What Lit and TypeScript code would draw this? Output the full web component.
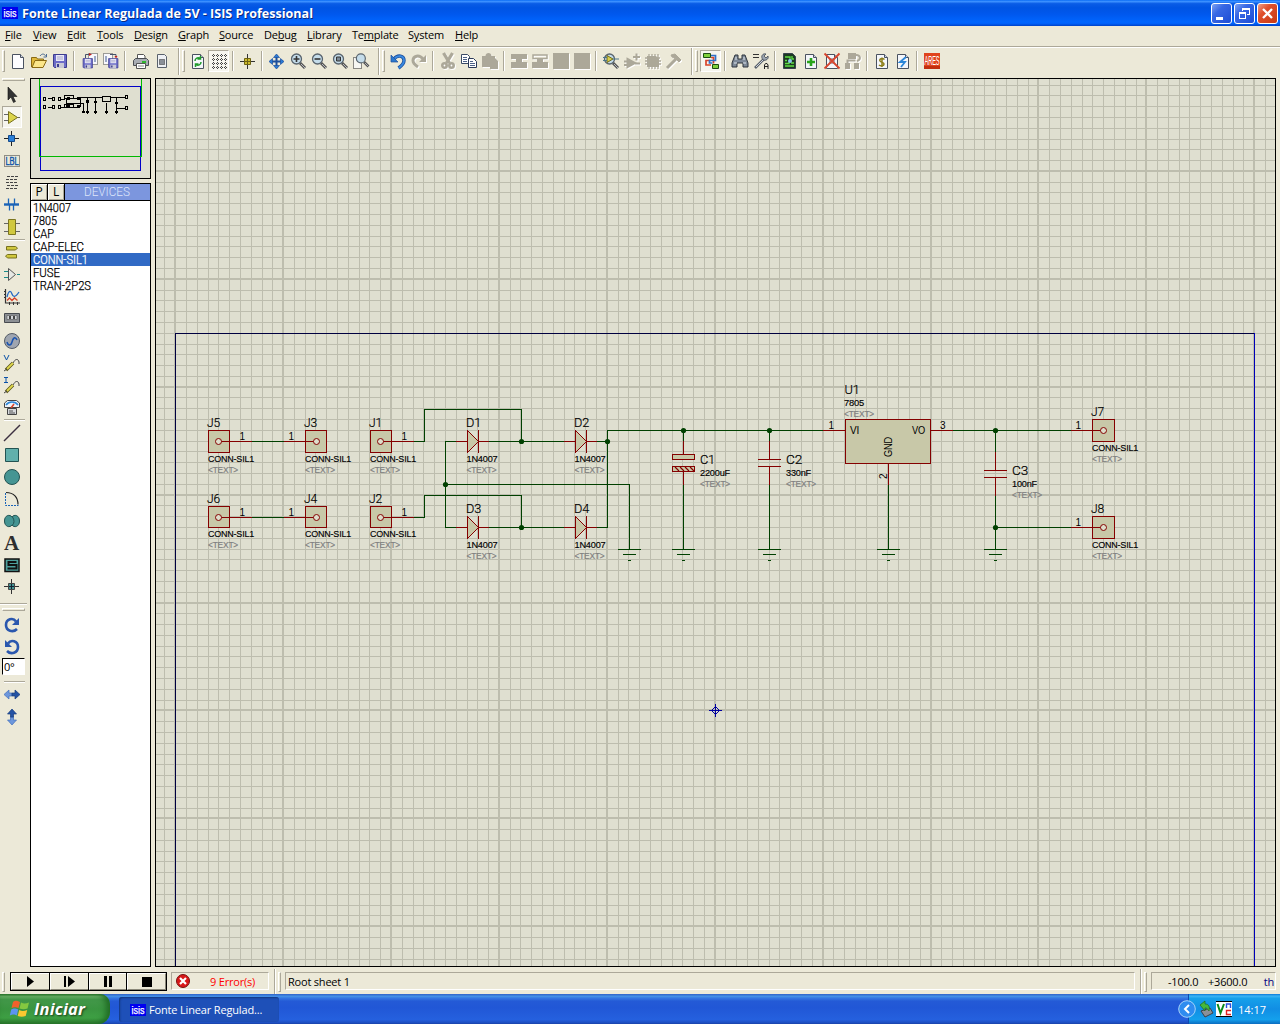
import { LitElement, html, css, svg, nothing } from "lit";
import { customElement, property } from "lit/decorators.js";

const range = (n: number) => Array.from({ length: n }, (_, i) => i);

/* ---------- icon drawings, all on a 16 x 16 grid ---------- */
const page = (inner: unknown) => svg`
  <path d="M2.5 1.5h8l3 3v11h-11z" fill="#f4f6fa" stroke="#4a5260"/><path d="M10.5 1.5v3h3" fill="#cfd6e2" stroke="#4a5260"/>${inner}`;
const lens = (inner: unknown) => svg`
  <path d="M10 10l5 5" stroke="#555" stroke-width="3"/><path d="M11 11l4 4" stroke="#b9bcc2" stroke-width="1"/>
  <circle cx="6.5" cy="6" r="5" fill="#c4dcea" stroke="#59646e" stroke-width="1.3"/>${inner}`;
const floppy = svg`<path d="M1.5 1.5h13v13h-12l-1-1z" fill="#6c6cc8" stroke="#3c3c8e"/><path d="M4 2h8v6H4z" fill="#e8e8f6"/><path d="M5 4h6M5 6h6" stroke="#a8a8cc"/><path d="M4 10h8v5H4z" fill="#c9c9d6"/><path d="M5 11h2v3H5z" fill="#3c3c8e"/>`;

const icons: Record<string, unknown> = {
  new: svg`<path d="M2.500 1.500h8l3 3v11h-11z" fill="#fdfdff" stroke="#4a5260"/><path d="M10.500 1.500v3h3" fill="#d5dbe6" stroke="#4a5260"/>`,
  open: svg`<path d="M.5 14V4.500h5l1 1.500h6v3" fill="#e0b93c" stroke="#8a6a14"/><path d="M1 14.500L4 7.500h11.500l-3.500 7z" fill="#fbe68a" stroke="#8a6a14"/><path d="M9 3c2-3 5-2 5.500 0M15.500 1v3h-3" fill="none" stroke="#4b6a92"/>`,
  save: floppy,
  importSection: svg`<path d="M6.500.5h9v11h-9z" fill="#f8f8fc" stroke="#444" stroke-dasharray="1 1"/><path d="M3.500 5V1.500H8" fill="none" stroke="#46526a"/><path d="M7 0l3 1.500L7 3z" fill="#c02020"/><g transform="translate(0,4.500) scale(.72)">${floppy}</g><path d="M12 4h2M12 6h2M12 8h2" stroke="#3c5a8e"/>`,
  exportSection: svg`<path d="M.5.5h9v11h-9z" fill="#f8f8fc" stroke="#444" stroke-dasharray="1 1"/><path d="M7 1.500h6V4" fill="none" stroke="#46526a"/><path d="M11.500 3h3L13 5.500z" fill="#c02020"/><g transform="translate(4.500,4.500) scale(.72)">${floppy}</g><path d="M2 4h2M2 6h2M2 8h2" stroke="#3c5a8e"/>`,
  print: svg`<path d="M4.500 6V1.500h6l1.500 1.500V6" fill="#fff" stroke="#555"/><path d="M.5 7.500l2-2h11l2 2v5H.5z" fill="#a9adb3" stroke="#4a4d52"/><path d="M3.500 10.500h9v5h-9z" fill="#fff" stroke="#555"/><path d="M5 13h6" stroke="#888"/><path d="M9 8h4v2H9z" fill="#2fb62f"/>`,
  area: svg`<path d="M3.500 1.500h7l2 2v11h-9z" fill="#eef0f4" stroke="#59616c"/><path d="M5.500 6.500h5v5h-5z" fill="#8a9098" stroke="#333" stroke-dasharray="1 1"/>`,
  refresh: page(svg`<path d="M5 8c0-3 3-4 5-2.500M10.500 3v3h-3M11 9c0 3-3 4-5 2.500M5.500 14v-3h3" fill="none" stroke="#1f9a2c" stroke-width="1.500"/>`),
  grid: svg`<path d="M1 2.500h15M1 6.500h15M1 10.500h15M1 14.500h15M2.500 1v15M6.500 1v15M10.500 1v15M14.500 1v15" stroke="#444" stroke-dasharray="1 1" shape-rendering="crispEdges"/>`,
  origin: svg`<path d="M7.500 1v15M0 8.500h15" stroke="#333"/><path d="M4.500 5.500h6v6h-6z" fill="#cdbb2b" stroke="#6d6212"/><path d="M7.500 6v5M5 8.500h5" stroke="#6d6212"/>`,
  pan: svg`<path d="M7.500 2v13M1 8.500h13" stroke="#1d4f9c" stroke-width="2"/><path d="M7.500 1l3 3.500h-6zM7.500 16l3-3.500h-6zM0 8.500l3.500-3v6zM15 8.500l-3.500-3v6z" fill="#2b7bd6" stroke="#1d4f9c" stroke-width=".7"/>`,
  zoomIn: lens(svg`<path d="M3.500 6h6M6.500 3v6" stroke="#333" stroke-width="1.600"/>`),
  zoomOut: lens(svg`<path d="M3.500 6h6" stroke="#333" stroke-width="1.600"/>`),
  zoomAll: lens(svg`<path d="M4.500 4h4v4h-4z" fill="#7b8a96" stroke="#333"/>`),
  zoomArea: svg`<path d="M.5 4.500h8v11h-8z" fill="#f6f6f2" stroke="#222" stroke-dasharray="1 1"/><g transform="translate(2,0) scale(.9)">${lens(nothing)}</g>`,
  undo: svg`<path d="M4 6c4-5 10-3 10 1.500 0 3-2 5-5.500 7.500" fill="none" stroke="#1d4f9c" stroke-width="3.400"/><path d="M4 6c4-5 10-3 10 1.500 0 3-2 5-5.500 7.500" fill="none" stroke="#3a8ae0" stroke-width="1.800"/><path d="M1 2v7h7z" fill="#2b78ce" stroke="#1d4f9c" stroke-width=".7"/>`,
  redo: svg`<path d="M12 6C8 1 2 3 2 7.500 2 10 4 12 7 14" fill="none" stroke="#aca899" stroke-width="3"/><path d="M15 2v7H8z" fill="#aca899"/>`,
  cut: svg`<path d="M3.500 0l6 10M12.500 0l-6 10" stroke="#aca899" stroke-width="3.200"/><circle cx="4.500" cy="12.500" r="2.200" fill="none" stroke="#aca899" stroke-width="2.600"/><circle cx="11.500" cy="12.500" r="2.200" fill="none" stroke="#aca899" stroke-width="2.600"/>`,
  copy: svg`<path d="M.5 1.500h6l2 2v7h-8z" fill="#fff" stroke="#3a4a66"/><path d="M2 4.500h4M2 6.500h4M2 8.500h4" stroke="#4d6288"/><path d="M7.500 5.500h5l3 3v6h-8z" fill="#fff" stroke="#2b3a5a"/><path d="M9 8.500h3M9 10.500h5M9 12.500h5" stroke="#4d6288"/>`,
  paste: svg`<path d="M0 3h3.500c0-4 6-4 6 0H13v2l3 3v8H8v-2H0z" fill="#aca899"/>`,
  blockCopy: svg`<path d="M0 1h16v5h-5v3h5v6H0V9h5V6H0z" fill="#aca899"/>`,
  blockMove: svg`<path d="M1 2h14v3.500H1z" fill="none" stroke="#aca899" stroke-width="1.500"/><path d="M5 5h6v4h5v6H0V9h5z" fill="#aca899"/>`,
  block: svg`<path d="M0 0h16v16H0z" fill="#aca899"/>`,
  pick: svg`${lens(nothing)}<path d="M4 2.500l6 3.500-6 3.500z" fill="#d9cf4a" stroke="#6f6a1e"/><path d="M0 4.500h4M0 7.500h4M10 6h6" stroke="#4d7688"/>`,
  make: svg`<path d="M3.500 6l7.500 4-7.500 4z" fill="#aca899" stroke="#aca899" stroke-width="2"/><path d="M0 8.500h3M0 12h3M11 10.500h5M9 4h7M12.500.5v7" stroke="#aca899" stroke-width="2"/>`,
  pack: svg`<path d="M2 3h9l3 3v8H2z" fill="#aca899"/><path d="M0 5h15M0 8h16M0 11h16M4 1v15M7 1v15M10 1v15M13 1v15" stroke="#aca899" stroke-width="1.300"/>`,
  hammer: svg`<path d="M1 15L10 6" stroke="#aca899" stroke-width="3"/><path d="M5 2l4-1 6 6-2 2-3-3-4-2z" fill="#aca899" stroke="#aca899"/>`,
  wire: svg`<path d="M7 7.500H3v4.500h5M8 4.500h2.500v6" fill="none" stroke="#d8442a" stroke-width="1.700"/><path d="M8 2.500h4.500v5H6.500V10h3" fill="none" stroke="#2d6fc8" stroke-width="1.700"/><path d="M.5.500h7v4h-7zM9.500 11.500h6v4h-6z" fill="#7ed03c" stroke="#1b4d10"/>`,
  find: svg`<path d="M3 2h3v4h4V2h3l3 8v4h-5v-4H5v4H0v-4z" fill="#7f8a98" stroke="#2f353d"/><path d="M2 10h3M11 10h3M4 4v3M12 4v3" stroke="#dfe5ec"/>`,
  props: svg`<path d="M0 1.500h6M0 4.500h6" stroke="#333"/><path d="M2 15L11 6" stroke="#59616c" stroke-width="2.600"/><path d="M3 14L10 7" stroke="#ccd2da"/><path d="M10 7C7 3 10 0 13 1l-2 2 2 2 2-2c1 3-2 5-5 4" fill="#9aa4b0" stroke="#454c56" stroke-width=".8"/><path d="M11.500 16v-4l1-1.500h1.500l1 1.500v4M11.500 13.500h3.500" fill="none" stroke="#222"/>`,
  sheet: svg`<path d="M1.500.5h9l3 3v12h-12z" fill="#1d3a22" stroke="#39424e"/><path d="M3 4h5v3M3 7.500h2M3 10.500h4V9M3 13h9M10 3v3h2M12 10H9" fill="none" stroke="#5fe044" stroke-width="1.300"/><circle cx="8" cy="8" r="2" fill="#8cc6ee"/>`,
  addSheet: page(svg`<path d="M8 5v8M4 9h8" stroke="#2aa51c" stroke-width="2.600"/>`),
  delSheet: svg`${page(svg`<path d="M5 6h6M5 8h6M5 10h6" stroke="#667"/>`)}<path d="M.5.500l15 15M15.500.5L.5 15.500" stroke="#d8452e" stroke-width="1.800"/>`,
  hier: svg`<path d="M3 0h8v6H3zM0 10h5v6H0zM9 10h5v6H9z" fill="#aca899"/><path d="M2.500 11V7.500h8M11 2c5 0 5 5 1 6" fill="none" stroke="#aca899" stroke-width="2"/>`,
  bom: page(svg`<path d="M10.500 6.500C8 4.500 5 6 6 8s4 1 4 3-3 2.500-5 1M8 4.500v9.500" fill="none" stroke="#8c7e18" stroke-width="1.500"/>`),
  erc: page(svg`<path d="M11 4L5 9h5l-4 5" fill="none" stroke="#2b86d8" stroke-width="1.800"/>`),
  ares: svg`<path d="M0 0h16v16H0z" fill="#e0431c"/><path d="M0 13h16v3H0z" fill="#c22f10"/><text x=".5" y="12" font-family="Liberation Sans" font-size="12" fill="#fff" textLength="15" lengthAdjust="spacingAndGlyphs">ARES</text>`,

  arrow: svg`<path d="M4 0v13l3-3 2.500 5.500 2-1L9 9.500h4z" fill="#333" stroke="#111" stroke-width=".6"/>`,
  comp: svg`<path d="M0 5.500h4M0 11.500h4M13 8.500h3" stroke="#666"/><path d="M4.500 2.500l9 6-9 6z" fill="#dcd44c" stroke="#77711e"/>`,
  junction: svg`<path d="M7.500 0v15M0 7.500h15" stroke="#222"/><path d="M4.500 4.500h6v6h-6z" fill="#2b80d8" stroke="#154a8c"/>`,
  label: svg`<path d="M.5 2.500h15v11H.5z" fill="none" stroke="#333" stroke-dasharray="1 1"/><text x="1.500" y="11.500" font-family="Liberation Sans" font-size="10" fill="#0a52a8" stroke="#0a52a8" stroke-width=".4" textLength="13" lengthAdjust="spacingAndGlyphs">LBL</text>`,
  script: svg`<path d="M3 1.500h11M2 4.500h12M2 7.500h11M3 10.500h11M2 13.500h11" stroke="#444" stroke-dasharray="3 1"/>`,
  bus: svg`<path d="M0 7.500h15" stroke="#1a64b8" stroke-width="2.400"/><path d="M4.500 1.500v6M10.500 1.500v6M5.500 7.500v6M9.500 7.500v6" stroke="#1a64b8" stroke-width="1.300"/>`,
  sub: svg`<path d="M0 4.500h4M0 12.500h4M12 4.500h4M12 12.500h4" stroke="#666"/><path d="M4.500.500h7v15h-7z" fill="#d0c83e" stroke="#7c7620"/>`,
  terminal: svg`<path d="M2.500 1.500h9l2 1.500-2 2h-9zM12.500 9.500h-9l-2 1.500 2 2h9z" fill="#d0c83e" stroke="#77711e"/>`,
  pin: svg`<path d="M0 4.500h4M0 10.500h4M13 7.500h3" stroke="#1a8a8a"/><path d="M4.500 1.500l7 6-7 6z" fill="#e6e8e4" stroke="#555"/>`,
  graph: svg`<path d="M1.500 0v14H16" fill="none" stroke="#333" stroke-width="1.200"/><path d="M0 2.500h2M0 5.500h2M0 8.500h2M5.500 13v3M9.500 13v3M13.500 13v3" stroke="#333"/><path d="M3 8c2-8 4-6 5-3s3 4 7-2" fill="none" stroke="#2368c4" stroke-width="1.300"/><path d="M3 11.500l2.500-2.500 2.500 2.500 2.500-2.500 3 2.500" fill="none" stroke="#d8442a" stroke-width="1.400"/>`,
  tape: svg`<path d="M.5 2.500h15v9H.5z" fill="#8d9094" stroke="#484b50"/><path d="M3 4.500h10v4H3z" fill="#d5d7da" stroke="#555" stroke-width=".6"/><path d="M5 5h2v3H5zM9 5h2v3H9z" fill="#444"/>`,
  generator: svg`<circle cx="8" cy="8" r="7.500" fill="#a0a6b0" stroke="#555c66"/><path d="M3 9c1 4 4 4 5 0s3-6 5-2" fill="none" stroke="#1c55b0" stroke-width="1.500"/>`,
  vprobe: svg`<path d="M0 0l2.500 5L5 0" fill="none" stroke="#0a52a8"/><path d="M2 15L9 8" stroke="#59541a" stroke-width="3.400"/><path d="M3 14L9 8" stroke="#e0d84e" stroke-width="1.800"/><path d="M9 8c2-4 5-5 6-1v2M0 16l3-2" fill="none" stroke="#444"/>`,
  iprobe: svg`<path d="M0 .5h4M0 5.500h4M2 .5v5" fill="none" stroke="#0a52a8"/><path d="M2 15L9 8" stroke="#59541a" stroke-width="3.400"/><path d="M3 14L9 8" stroke="#e0d84e" stroke-width="1.800"/><path d="M9 8c2-4 5-5 6-1v2M0 16l3-2" fill="none" stroke="#444"/>`,
  meter: svg`<path d="M.5 8.500V4l3-2.500h9l3 2.500v4.500z" fill="#eef2f8" stroke="#444"/><path d="M2 6c3-4 9-4 12 0" fill="none" stroke="#2a86d8" stroke-width="1.500"/><path d="M7 9l3-4" stroke="#d8442a" stroke-width="1.500"/><path d="M3.500 9.500h9v6h-9z" fill="#d6d8dc" stroke="#444"/><path d="M5 12h4M5 14h6" stroke="#555"/>`,
  line: svg`<path d="M0 16L16 0" stroke="#3c3040" stroke-width="1.400"/>`,
  box: svg`<path d="M1.500 1.500h13v13h-13z" fill="#62b0ac" stroke="#235352"/>`,
  circle: svg`<circle cx="8" cy="8" r="7.500" fill="#459593" stroke="#235352"/>`,
  arc: svg`<path d="M1.500 2v12.500h13" fill="none" stroke="#1a64b8" stroke-dasharray="2 1"/><path d="M2 1.500c8 0 12 5 12 12" fill="none" stroke="#222" stroke-width="1.200"/>`,
  closed: svg`<path d="M8 4c2-3 7.500-2 7.500 4s-5.500 7-7.500 4c-2 3-7.500 2-7.500-4S6 1 8 4z" fill="#459593" stroke="#235352"/><path d="M8.500 4c2 3 2 6 0 8" fill="none" stroke="#235352"/>`,
  text: svg`<text x="0" y="14.500" font-family="Liberation Serif" font-size="20" font-weight="bold" fill="#2e2e2e" textLength="15" lengthAdjust="spacingAndGlyphs">A</text>`,
  symbol: svg`<path d="M1 2h14v12.500H1z" fill="#4d9e9b" stroke="#111" stroke-width="1.500"/><path d="M12.500 5H4.500v3h8v3.500h-9" fill="none" stroke="#111" stroke-width="2"/>`,
  marker: svg`<path d="M7.500 0v15M0 7.500h15" stroke="#333"/><path d="M4.500 4.500h6v6h-6z" fill="#459593" stroke="#444"/><path d="M7.500 5v5M5 7.500h5" stroke="#123"/>`,
  cw: svg`<path d="M12 4.500C9 0 2 2 2 8s7 8 11 4" fill="none" stroke="#2a57ae" stroke-width="2.600"/><path d="M15 1v7H8z" fill="#2a57ae"/>`,
  ccw: svg`<path d="M4 4.500C7 0 14 2 14 8s-7 8-11 4" fill="none" stroke="#2a57ae" stroke-width="2.600"/><path d="M1 1v7h7z" fill="#2a57ae"/>`,
  mirrorX: svg`<path d="M0 7.500L5 3v3h3v3H5v3z" fill="#6d97dc" stroke="#4470bc" stroke-width=".7"/><path d="M16 7.500L11 3v3H8v3h3v3z" fill="#2453a4" stroke="#173c80" stroke-width=".7"/>`,
  mirrorY: svg`<path d="M8 16l4.500-5h-3V8h-3v3h-3z" fill="#6d97dc" stroke="#4470bc" stroke-width=".7"/><path d="M8 0l4.500 5h-3v3h-3V5h-3z" fill="#2453a4" stroke="#173c80" stroke-width=".7"/>`,
};

const disabled = new Set(["redo", "cut", "paste", "blockCopy", "blockMove", "block", "make", "pack", "hammer", "hier"]);

@customElement("tool-button")
class ToolButton extends LitElement {
  @property() name = "";
  @property({ type: Boolean, reflect: true }) pressed = false;
  static styles = css`
    :host { display: flex; align-items: center; justify-content: center; box-sizing: border-box; flex: none; }
    svg { display: block; flex: none; width: 16px; height: 16px; overflow: visible; }
    .dim { filter: drop-shadow(1px 1px 0 #fff); }
  `;
  render() {
    return html`<svg viewBox="0 0 16 16" class=${disabled.has(this.name) ? "dim" : ""}>${icons[this.name]}</svg>`;
  }
}

/* ---------- schematic ---------- */
const GREEN = "#004000";
const RED = "#840000";
const STEP = 10.79;

const wire = (d: string) => svg`<path d=${d} fill="none" stroke=${GREEN} shape-rendering="crispEdges"/>`;
const pinLine = (d: string) => svg`<path d=${d} fill="none" stroke=${RED} shape-rendering="crispEdges"/>`;
const ref = (x: number, y: number, t: string, w = 13) =>
  svg`<text x=${x} y=${y} class="ref" textLength=${w} lengthAdjust="spacingAndGlyphs">${t}</text>`;
const val = (x: number, y: number, t: string, w: number) =>
  svg`<text x=${x} y=${y} class="val" textLength=${w} lengthAdjust="spacingAndGlyphs">${t}</text>
      <text x=${x} y=${y + 11} class="hint" textLength="30" lengthAdjust="spacingAndGlyphs">&lt;TEXT&gt;</text>`;
const num = (x: number, y: number, t: string) => svg`<text x=${x} y=${y} class="num">${t}</text>`;
const dot = (x: number, y: number) => svg`<circle cx=${x + 0.5} cy=${y + 0.5} r="2.600" fill=${GREEN}/>`;

/* left is the box's left edge, x/y the pin centre */
const connector = (left: number, x: number, y: number, name: string, dir: number, lower = 0) => svg`
  <rect x=${left + 0.5} y=${y - 10.5} width=${left > 1000 ? 22 : 21} height=${22 - lower} fill="#c8c8a8" stroke=${RED} shape-rendering="crispEdges"/>
  ${pinLine(dir > 0 ? `M${x + 3} ${y + 0.5}H${x + 34}` : `M${x - 32} ${y + 0.5}H${x - 2}`)}
  <circle cx=${x + 0.5} cy=${y + 0.5} r="3" fill="#dedecb" stroke=${RED}/>
  ${ref(left - 1, y - 14, name)}${val(left, y + 21 - lower, "CONN-SIL1", 46)}`;

const diode = (x: number, y: number, name: string) => svg`
  ${pinLine(`M${x - 11} ${y + 0.5}H${x}M${x + 12} ${y + 0.5}H${x + 22}`)}
  <path d=${`M${x + 0.5} ${y - 10.5}v22l11-11z`} fill="#c8c8a8" stroke=${RED} shape-rendering="crispEdges"/>
  ${pinLine(`M${x + 11.5} ${y - 11}v23`)}
  ${ref(x - 1, y - 14, name, 15)}${val(x - 0.5, y + 21, "1N4007", 31)}`;

const ground = (x: number) => wire(`M${x - 11} 549.5h23M${x - 6} 554.5h13M${x - 1} 560.5h3`);

const capacitor = (x: number, y: number, name: string, value: string, w: number) => svg`
  ${pinLine(`M${x + 0.5} ${y - 18}v18M${x - 11} ${y + 0.5}h23M${x - 11} ${y + 7.5}h23M${x + 0.5} ${y + 8}v18`)}
  ${ref(x + 17, y + 5, name, 16)}${val(x + 17, y + 17, value, w)}`;

@customElement("schematic-view")
class SchematicView extends LitElement {
  static styles = css`
    :host { display: block; }
    svg { display: block; width: 1121px; height: 889px; }
    text { font-family: "Liberation Sans", sans-serif; fill: #000; }
    .ref { font-family: Roboto, "Liberation Sans", sans-serif; font-weight: 300; font-size: 13.500px; stroke: #000; stroke-width: 0.2px; }
    .val { font-size: 9.500px; stroke: #000; stroke-width: 0.15px; }
    .hint { font-size: 9.500px; fill: #808080; stroke: #808080; stroke-width: 0.2px; }
    .num { font-size: 10px; }
    .name { font-size: 10px; }
  `;
  render() {
    const xs = range(104).map((i) => i - 1);
    const ys = range(84).map((i) => i - 24);
    return html`<svg viewBox="155 78 1121 889">
      <rect x="155" y="78" width="1121" height="889" fill="#dfdfd0"/>
      <g fill="#bdbdae" shape-rendering="crispEdges">
        ${xs.map((k) => {
          const x = Math.floor(175.7 + STEP * k);
          return k % 10 ? svg`<rect x=${x} y="78" width="1" height="889"/>` : svg`<rect x=${x - 1} y="78" width="2" height="889"/>`;
        })}
        ${ys.map((k) => {
          const y = Math.floor(710.9 - STEP * k);
          return k % 10 ? svg`<rect x="155" y=${y} width="1121" height="1"/>` : svg`<rect x="155" y=${y - 1} width="1121" height="2"/>`;
        })}
      </g>
      <path d="M175.500 967V333.500H1254" fill="none" stroke="#000040" shape-rendering="crispEdges"/>
      <path d="M1254.500 333V967" stroke="#0000b8" shape-rendering="crispEdges"/>

      ${wire("M252 441.5H284M252 517.500H284")}
      ${wire("M414 441.500H424.500V409.500H521.500V441.500M414 517.500H424.500V495.500H521.500V527.500")}
      ${wire("M456 441.500H445.500V527.500H456M445 484.500H629.500V549")}
      ${wire("M489 441.500H564M489 527.500H564M597 441.500H607M597 527.500H607.500V430.500H823")}
      ${wire("M683.500 430V441M683.500 485V549M769.500 430V441M769.500 485V549M888.500 485V549")}
      ${wire("M952 430.500H1072M995.500 430V452M995.500 496V549M995 527.500H1072")}

      ${connector(208, 218, 441, "J5", 1)}${connector(305, 316, 441, "J3", -1)}${connector(370, 380, 441, "J1", 1)}
      ${connector(208, 218, 517, "J6", 1, 1)}${connector(305, 316, 517, "J4", -1, 1)}${connector(370, 380, 517, "J2", 1, 1)}
      ${connector(1092, 1103, 430, "J7", -1)}${connector(1092, 1103, 527, "J8", -1)}
      ${num(239.500, 440, "1")}${num(288.500, 440, "1")}${num(401.500, 440, "1")}
      ${num(239.500, 516, "1")}${num(288.500, 516, "1")}${num(401.500, 516, "1")}
      ${num(828.500, 429, "1")}${num(940, 429, "3")}${num(1075.500, 429, "1")}${num(1075.500, 526, "1")}

      ${diode(467, 441, "D1")}${diode(575, 441, "D2")}${diode(467, 527, "D3")}${diode(575, 527, "D4")}

      ${pinLine("M683.500 441V454M683.500 472V485")}
      <rect x="672.500" y="454.500" width="22" height="5" fill="#c8c8a8" stroke=${RED} shape-rendering="crispEdges"/>
      <rect x="672.500" y="466.500" width="22" height="5" fill="#c8c8a8" stroke=${RED} shape-rendering="crispEdges"/>
      <path d="M675 467l4 4M680 467l4 4M685 467l4 4M690 467l4 4" stroke=${RED} stroke-width="1.100"/>
      ${ref(700, 464, "C1", 15)}${val(700, 476, "2200uF", 30)}
      ${capacitor(769, 459, "C2", "330nF", 25)}
      ${capacitor(995, 470, "C3", "100nF", 25)}

      ${pinLine("M823 430.500H845M931 430.500H953M888.500 464V485")}
      <rect x="845.500" y="419.500" width="85" height="44" fill="#c8c8a8" stroke=${RED} shape-rendering="crispEdges"/>
      ${ref(844.5, 394, "U1", 15)}${val(844, 406, "7805", 20)}
      <text x="850" y="434" class="name" textLength="9">VI</text>
      <text x="912" y="434" class="name" textLength="13" lengthAdjust="spacingAndGlyphs">VO</text>
      <text transform="translate(892 457) rotate(-90)" class="name" textLength="20" lengthAdjust="spacingAndGlyphs">GND</text>
      <text transform="translate(887 479) rotate(-90)" class="num">2</text>

      ${[629, 683, 769, 888, 995].map(ground)}
      ${dot(521, 441)}${dot(607, 441)}${dot(445, 484)}${dot(521, 527)}${dot(683, 430)}${dot(769, 430)}${dot(995, 430)}${dot(995, 527)}

      <path d="M709 710.500h13M715.500 704v13" stroke="#0000a0" shape-rendering="crispEdges"/>
      <path d="M711.500 710.500l4-4 4 4-4 4z" fill="none" stroke="#0000a0"/>
      <rect x="155.500" y="78.500" width="1120" height="888" fill="none" stroke="#000" shape-rendering="crispEdges"/>
    </svg>`;
  }
}

/* ---------- sheet overview ---------- */
@customElement("overview-pane")
class OverviewPane extends LitElement {
  static styles = css`
    :host { display: block; box-sizing: border-box; width: 121px; height: 101px; border: 1px solid #000; }
    svg { display: block; width: 119px; height: 99px; background: #dfdfd0; }
  `;
  render() {
    const box = (x: number, y: number) => svg`<rect x=${x + 0.5} y=${y + 0.5} width="2" height="3" fill="none" stroke="#000"/>`;
    return html`<svg viewBox="31 79 119 99" shape-rendering="crispEdges">
      <path d="M40.500 156V86.500H140.500V156M40.500 157V170.500H140.500V157" fill="none" stroke="#0000c8"/>
      <path d="M39.500 79V156.500H141.500V79" fill="none" stroke="#00b800"/>
      ${[[43, 97], [52, 97], [58, 97], [43, 105], [52, 105], [58, 105], [125, 95], [125, 106]].map(([x, y]) => box(x, y))}
      <path d="M48 98.500h4M48 107.500h4M61 99.500h3V95.500h9V99M64 98.500h16M61 107.500h3V104.500h9V107M66 98V107M66 103.500h17V112M80 97.500h22M111 97.500h14M80 97V107M64 107.500h16M87.500 98V114M95.500 98V114M106.500 103V114M116.500 98V114M116 108.500h9" fill="none" stroke="#000"/>
      <rect x="102.500" y="96.500" width="8" height="5" fill="none" stroke="#000"/>
      <path d="M67 97h3v3h-3zM77 97h3v3h-3zM67 105h3v3h-3zM77 105h3v3h-3zM86 100h3v3h-3zM94 101h3v2h-3zM115 102h3v2h-3zM82 111h3v2h-3zM86 111h3v2h-3zM94 111h3v2h-3zM105 111h3v2h-3zM115 111h3v2h-3z" fill="#000"/>
    </svg>`;
  }
}

const logo = svg`<rect width="16" height="12" fill="#0000f0"/><text x="1.500" y="10" font-family="Liberation Sans" font-size="11" fill="#fff" stroke="#fff" stroke-width=".25" textLength="13" lengthAdjust="spacingAndGlyphs">isis</text>`;

@customElement("app-root")
class AppRoot extends LitElement {
  static styles = css`
    * { box-sizing: border-box; }
    :host { display: flex; flex-direction: column; width: 1280px; height: 1024px; overflow: hidden; background: #ece9d8; font: 11px/13px "Open Sans", "Noto Sans", sans-serif; letter-spacing: -0.2px; color: #000; }
    svg { display: block; flex: none; letter-spacing: 0; overflow: visible; }
    .title { display: flex; align-items: center; height: 26px; flex: none; padding: 0 2px; background: linear-gradient(#0a6cf5 0, #3c90ff 6%, #0a5ce6 14%, #0054e3 30%, #0058ee 55%, #0066ff 85%, #0060f8 91%, #0042c8 100%); }
    .title div.name { flex: 1; margin-left: 4px; }
    .title .name text { font: bold 12.500px "Open Sans", sans-serif; text-shadow: 1px 1px 0 #0a2a80; }
    .winbtns { display: flex; gap: 2px; }
    .winbtn { width: 21px; height: 21px; border: 1px solid #fff; border-radius: 3px; background: linear-gradient(135deg, #7ea2f2 0, #3868e4 35%, #1d4cd4 100%); }
    .winbtn.close { background: linear-gradient(135deg, #f0a088 0, #e0502c 35%, #c83a14 100%); }
    .menu { display: flex; height: 20px; flex: none; padding-left: 5px; line-height: 17px; }
    .menu span { flex: none; white-space: nowrap; }
    .menu u { text-underline-offset: 1px; }
    .m0 { width: 28px; } .m1 { width: 34px; } .m2 { width: 30px; } .m3 { width: 37px; } .m4 { width: 44px; } .m5 { width: 41px; }
    .m6 { width: 45px; } .m7 { width: 43px; } .m8 { width: 45px; } .m9 { width: 56px; } .m10 { width: 47px; } .m11 { width: 30px; }
    .rule { height: 2px; flex: none; border-top: 1px solid #aca899; border-bottom: 1px solid #fff; }
    .toolbar { display: flex; height: 30px; flex: none; }
    .group { display: flex; height: 27px; padding-top: 2px; }
    .group.framed { border-left: 1px solid #aca899; box-shadow: inset 1px 0 #fff; }
    .grip { flex: none; width: 3px; height: 22px; margin: 0 3px 0 3px; border: 1px solid; border-color: #fff #aca899 #aca899 #fff; }
    .group tool-button { width: 21px; height: 22px; }
    .vsep { flex: none; width: 2px; height: 20px; margin: 1px 3px; border-left: 1px solid #aca899; border-right: 1px solid #fff; }
    .g0 { width: 178px; } .g1 { width: 200px; } .g2 { width: 313px; } .g3 { width: 300px; }
    .g0 .grip { margin: 0 2px 0 2px; }
    .g0 .vsep { margin-right: 4px; }
    .framed .grip { margin-right: 2px; }
    tool-button[pressed] { background: #f6f5ee; border: 1px solid; border-color: #aca899 #fff #fff #aca899; }
    .body { display: flex; height: 890px; flex: none; }
    .side { display: flex; flex-direction: column; width: 30px; padding-top: 0; flex: none; }
    .side tool-button { width: 20px; height: 22px; margin-left: 2px; }
    .hgrip { flex: none; width: 23px; height: 3px; margin: 0 0 3px 2px; border: 1px solid; border-color: #fff #aca899 #aca899 #fff; }
    .hsep { flex: none; width: 21px; height: 2px; margin: 1px 0 1px 4px; border-top: 1px solid #aca899; border-bottom: 1px solid #fff; }
    .side .wide { width: 27px; margin: 5px 0 3px; }
    .angle { width: 23px; height: 17px; margin: 0 0 5px 2px; padding-left: 1px; background: #fff; border: 1px solid; border-color: #000 #fff #fff #000; line-height: 15px; }
    .panes { display: flex; flex-direction: column; gap: 4px; width: 125px; flex: none; }
    .devices { display: flex; flex-direction: column; width: 121px; height: 784px; border: 1px solid #000; background: #fff; }
    .dhead { display: flex; height: 17px; flex: none; border-bottom: 1px solid #000; background: #7c96de; }
    .dhead i { width: 17px; border-right: 1px solid #000; background: #ece9d8; font: 12px/16px "Open Sans", sans-serif; text-align: center; box-shadow: inset 1px 1px #fff, inset -1px -1px #aca899; }
    .dhead span { flex: 1; }
    .dhead svg { margin: 0 auto; }
    .row { height: 13px; padding-left: 2px; }
    .row.sel { background: #316ac5; }
    .row text, .dhead text { font: 300 12px Roboto, "Liberation Sans", sans-serif; stroke: #000; stroke-width: 0.25px; }
    .row.sel text { fill: #fff; stroke: #fff; }
    .dhead text { fill: #dfe6fa; stroke: none; }
    .status { display: flex; align-items: flex-start; height: 26px; flex: none; padding-top: 4px; }
    .status .grip { margin: 0 4px 0 2px; height: 20px; }
    .play { display: flex; width: 157px; height: 19px; border: 1px solid #000; margin: 0 0 0 1px; }
    .play span { flex: 1; background: #ece9d8; border: 1px solid; border-color: #fff #8a8778 #8a8778 #fff; }
    .play span + span { box-shadow: -1px 0 #000; }
    .play svg { margin: 0 auto; }
    .field { display: flex; align-items: center; height: 18px; border: 1px solid; border-color: #aca899 #fff #fff #aca899; white-space: pre; }
    .errors { width: 98px; margin-left: 4px; padding-left: 4px; color: #f00; gap: 20px; }
    .vline { width: 2px; height: 25px; margin: -3px 0 0 5px; border-left: 1px solid #aca899; border-right: 1px solid #fff; }
    .sheet { width: 850px; padding-left: 2px; }
    .coords { width: 125px; padding: 0 1px 0 16px; }
    .coords .a { width: 40px; } .coords .b { flex: 1; } .coords .c { color: #000080; }
    .taskbar { display: flex; height: 30px; flex: none; background: linear-gradient(#2f62c8 0, #4490e6 8%, #3375e2 14%, #245ad6 24%, #2157d6 45%, #2560de 85%, #1d4ec0 96%, #1941a5 100%); color: #fff; }
    .start { display: flex; align-items: center; gap: 4px; width: 110px; padding: 0 0 1px 10px; border-radius: 0 10px 12px 0; background: linear-gradient(#2f7a30 0, #6fb76d 8%, #43984a 18%, #3a9440 50%, #3ea044 80%, #2c7a2e 100%); box-shadow: inset -4px 0 6px #1f6a24; }
    .start b { font: italic bold 16.500px/20px "Open Sans", sans-serif; text-shadow: 1px 1px 2px #1a3c1a; letter-spacing: 0.2px; }
    .task { display: flex; align-items: center; gap: 3px; width: 160px; height: 25px; margin: 3px 0 0 9px; padding-left: 11px; border-radius: 3px; background: #1e50b8; box-shadow: inset 1px 1px 2px #12357e; letter-spacing: -0.16px; }
    .tray { display: flex; align-items: center; gap: 3px; width: 92px; margin-left: auto; border-left: 1px solid #0c4ab0; background: linear-gradient(#0c78d8 0, #3cb4f4 7%, #17a0ea 15%, #118ee4 50%, #14a0ec 85%, #0c6cc0 100%); }
    .tray .chev { margin-left: -11px; }
    .tray span { margin-left: 3px; letter-spacing: 0; }
  `;

  private bar(i: number, groups: string[]) {
    return html`<div class="group g${i} ${i ? "framed" : ""}"><div class="grip"></div>
      ${groups.map((g, n) => html`${n ? html`<div class="vsep"></div>` : nothing}${g.split(" ").map((name) =>
        html`<tool-button name=${name} ?pressed=${name === "grid" || name === "wire"}></tool-button>`)}`)}</div>`;
  }
  private tools(names: string) {
    return names.split(" ").map((n) => html`<tool-button name=${n} ?pressed=${n === "comp"}></tool-button>`);
  }
  render() {
    const menu = ["|F|ile", "|V|iew", "|E|dit", "|T|ools", "|D|esign", "|G|raph", "|S|ource", "De|b|ug", "|L|ibrary", "Te|m|plate", "S|y|stem", "|H|elp"];
    const devices: [string, number][] = [["1N4007", 38], ["7805", 24], ["CAP", 21], ["CAP-ELEC", 51], ["CONN-SIL1", 55], ["FUSE", 27], ["TRAN-2P2S", 58]];
    return html`
      <div class="title">
        <svg width="16" height="12">${logo}</svg>
        <div class="name"><svg width="300" height="18"><text x="0" y="13.500" fill="#fff" textLength="291" lengthAdjust="spacingAndGlyphs">Fonte Linear Regulada de 5V - ISIS Professional</text></svg></div>
        <div class="winbtns">
          <div class="winbtn"><svg width="19" height="19"><path d="M4 13h7v3H4z" fill="#fff"/></svg></div>
          <div class="winbtn"><svg width="19" height="19" shape-rendering="crispEdges"><path d="M7.500 7V4.500h7v6H12M7 5.500h8" fill="none" stroke="#fff"/><path d="M4.500 8.500h6v6h-6zM4 9.500h7" fill="none" stroke="#fff"/></svg></div>
          <div class="winbtn close"><svg width="19" height="19"><path d="M5 5l9 9M14 5l-9 9" stroke="#fff" stroke-width="2.300"/></svg></div>
        </div>
      </div>
      <div class="menu">${menu.map((m, i) => {
        const [a, b, c] = m.split("|");
        return html`<span class="m${i}">${a}<u>${b}</u>${c}</span>`;
      })}</div>
      <div class="rule"></div>
      <div class="toolbar">
        ${this.bar(0, ["new open save", "importSection exportSection", "print area"])}
        ${this.bar(1, ["refresh grid", "origin", "pan zoomIn zoomOut zoomAll zoomArea"])}
        ${this.bar(2, ["undo redo", "cut copy paste", "blockCopy blockMove block block", "pick make pack hammer"])}
        ${this.bar(3, ["wire", "find props", "sheet addSheet delSheet hier", "bom erc", "ares"])}
      </div>
      <div class="body">
        <div class="side">
          <div class="hgrip"></div>
          ${this.tools("arrow comp junction label script bus sub")}<div class="hsep"></div>
          ${this.tools("terminal pin graph tape generator vprobe iprobe meter")}<div class="hsep"></div>
          ${this.tools("line box circle arc closed text symbol marker")}
          <div class="hsep wide"></div><div class="hgrip"></div>
          ${this.tools("cw ccw")}
          <div class="angle">0°</div><div class="hsep"></div>
          ${this.tools("mirrorX mirrorY")}
        </div>
        <div class="panes">
          <overview-pane></overview-pane>
          <div class="devices">
            <div class="dhead"><i>P</i><i>L</i><span><svg width="48" height="16"><text x="0" y="12" textLength="46" lengthAdjust="spacingAndGlyphs">DEVICES</text></svg></span></div>
            ${devices.map(([d, w]) => html`<div class="row ${d === "CONN-SIL1" ? "sel" : ""}"><svg width="100" height="13"><text x="0" y="11" textLength=${w} lengthAdjust="spacingAndGlyphs">${d}</text></svg></div>`)}
          </div>
        </div>
        <schematic-view></schematic-view>
      </div>
      <div class="status">
        <div class="grip"></div>
        <div class="play">
          <span><svg width="16" height="15"><path d="M5 2v11l7-5.500z"/></svg></span>
          <span><svg width="16" height="15"><path d="M3 2h2v11H3zM7 2v11l7-5.500z"/></svg></span>
          <span><svg width="16" height="15"><path d="M4 2h3v11H4zM9 2h3v11H9z"/></svg></span>
          <span><svg width="16" height="15"><path d="M3 3h10v10H3z"/></svg></span>
        </div>
        <div class="field errors"><svg width="14" height="14"><circle cx="7" cy="7" r="6.500" fill="#d81818" stroke="#7a1010"/><path d="M4 4l6 6M10 4l-6 6" stroke="#fff" stroke-width="2.200"/></svg>9 Error(s)</div>
        <div class="vline"></div><div class="grip"></div>
        <div class="field sheet">Root sheet 1</div>
        <div class="vline"></div><div class="grip"></div>
        <div class="field coords"><span class="a">-100.0</span><span class="b">+3600.0</span><span class="c">th</span></div>
      </div>
      <div class="taskbar">
        <div class="start"><svg width="20" height="20"><path d="M3 3c3-2 4-1 7 0L8.500 9C6 8 4 8 1.500 9z" fill="#f0602c"/><path d="M11 3.500c3 1.500 5 1 8 0L17.500 9.500c-3 1-5 1-8 0z" fill="#84c840"/><path d="M1.200 10.500c3-1.500 4-1 7 0L6.800 16.500c-3-1.500-4-1-7 0z" fill="#5c94f0"/><path d="M9.200 11c3 1.500 5 1 8 0L15.700 17c-3 1-5 1-8 0z" fill="#fbc830"/></svg><b>Iniciar</b></div>
        <div class="task"><svg width="16" height="12">${logo}</svg>Fonte Linear Regulad...</div>
        <div class="tray">
          <svg class="chev" width="18" height="18"><circle cx="9" cy="9" r="8.300" fill="#2f8cf0" stroke="#a8d4fa"/><path d="M11 5L7 9l4 4" fill="none" stroke="#fff" stroke-width="2"/></svg>
          <svg width="14" height="16"><path d="M2 10l9-3 3 5-8 4z" fill="#8a9098" stroke="#3c4248"/><path d="M1 4l5-4v3c4 0 5 3 4 7-2-3-3-3-4-3v3z" fill="#46b83c" stroke="#1c6a1c" stroke-width=".7"/></svg>
          <svg width="16" height="16"><rect width="16" height="16" fill="#fff"/><path d="M0 .5h16M0 15.500h16" stroke="#000"/><path d="M1.500 3l3 9 3.500-9" fill="none" stroke="#0a8a1c" stroke-width="2"/><path d="M10.500 7V3h4v4" fill="none" stroke="#2b50e0" stroke-width="1.400"/><path d="M15 9.500h-4.500v4H15" fill="none" stroke="#e02020" stroke-width="1.400"/></svg>
          <span>14:17</span>
        </div>
      </div>`;
  }
}
